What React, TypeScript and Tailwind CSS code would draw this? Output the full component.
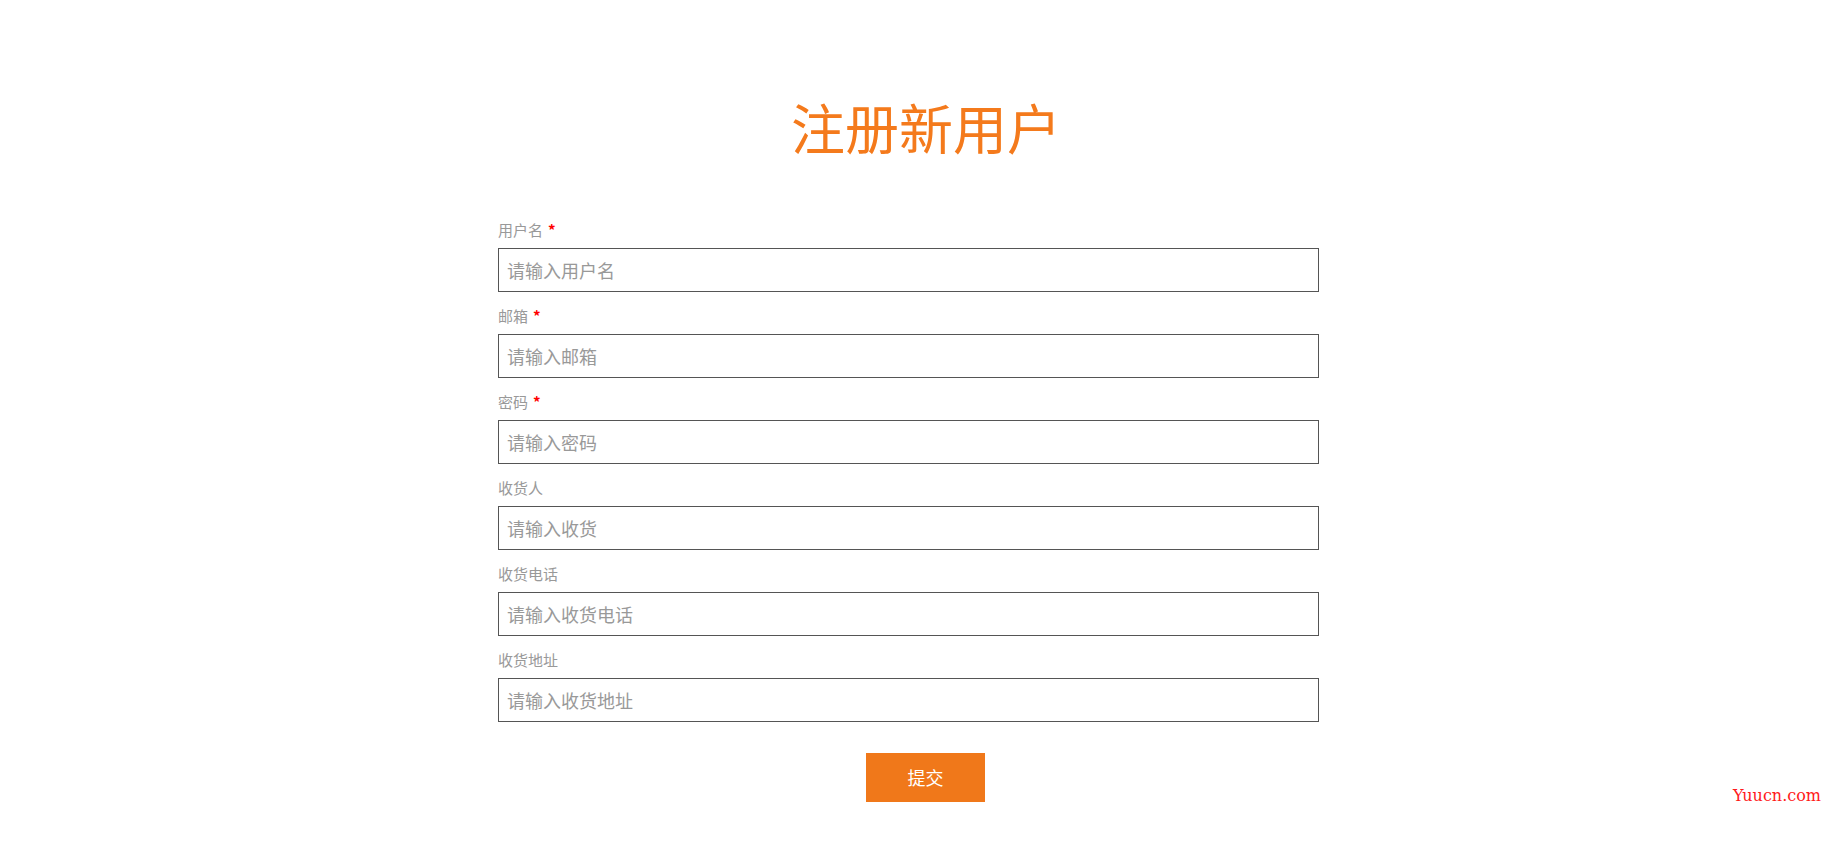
import React from "react";

type Field = { label: string; placeholder: string; required?: boolean; type?: string };

const fields: Field[] = [
  { label: "用户名", placeholder: "请输入用户名", required: true },
  { label: "邮箱", placeholder: "请输入邮箱", required: true },
  { label: "密码", placeholder: "请输入密码", required: true, type: "password" },
  { label: "收货人", placeholder: "请输入收货" },
  { label: "收货电话", placeholder: "请输入收货电话" },
  { label: "收货地址", placeholder: "请输入收货地址" },
];

const App = () => {
  return (
    <div className="relative min-h-[851px] bg-white pr-[17px] font-['Microsoft_YaHei','Noto_Sans_CJK_SC',sans-serif]">
      <h1 className="pt-[96px] pl-[35px] text-center text-[54px] leading-[62px] font-normal text-[#f47a1c]">
        注册新用户
      </h1>

      <form className="mx-auto mt-[62px] flex w-[821px] flex-col gap-[14px]" onSubmit={e => e.preventDefault()}>
        {fields.map(f => (
          <div key={f.label} className="flex flex-col gap-2">
            <label className="h-5 text-[15px] leading-5 text-[#999]">
              {f.label}
              {f.required && <span className="ml-[5px] font-bold text-[#ff0000]">*</span>}
            </label>
            <input
              type={f.type || "text"}
              placeholder={f.placeholder}
              className="h-[44px] w-full border border-[#555] px-2 text-[18px] text-[#333] outline-none placeholder:text-[#999]"
            />
          </div>
        ))}
        <button
          type="submit"
          className="ml-[368px] mt-[17px] h-[49px] w-[119px] bg-[#f0781a] text-[18px] text-white"
        >
          提交
        </button>
      </form>

      {/* watermark */}
      <div className="absolute right-[13px] top-[786px] font-['DejaVu_Serif',serif] text-[16px] leading-5 text-[#ff1a1a]">
        Yuucn.com
      </div>
    </div>
  );
};

export default App;
